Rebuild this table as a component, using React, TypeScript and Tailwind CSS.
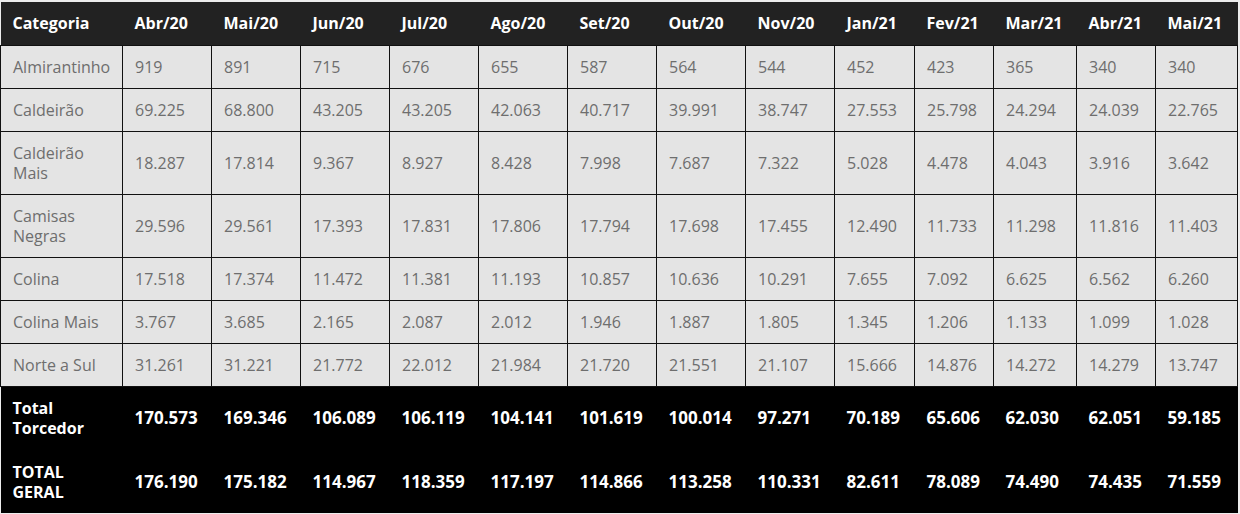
const months = [
  "Abr/20",
  "Mai/20",
  "Jun/20",
  "Jul/20",
  "Ago/20",
  "Set/20",
  "Out/20",
  "Nov/20",
  "Jan/21",
  "Fev/21",
  "Mar/21",
  "Abr/21",
  "Mai/21",
];

// column widths measured from the screenshot
const widths = [122, 89, 89, 89, 89, 89, 89, 89, 89, 80, 79, 83, 79, 82];

const rows: { name: string; values: string[] }[] = [
  { name: "Almirantinho", values: ["919", "891", "715", "676", "655", "587", "564", "544", "452", "423", "365", "340", "340"] },
  { name: "Caldeirão", values: ["69.225", "68.800", "43.205", "43.205", "42.063", "40.717", "39.991", "38.747", "27.553", "25.798", "24.294", "24.039", "22.765"] },
  { name: "Caldeirão Mais", values: ["18.287", "17.814", "9.367", "8.927", "8.428", "7.998", "7.687", "7.322", "5.028", "4.478", "4.043", "3.916", "3.642"] },
  { name: "Camisas Negras", values: ["29.596", "29.561", "17.393", "17.831", "17.806", "17.794", "17.698", "17.455", "12.490", "11.733", "11.298", "11.816", "11.403"] },
  { name: "Colina", values: ["17.518", "17.374", "11.472", "11.381", "11.193", "10.857", "10.636", "10.291", "7.655", "7.092", "6.625", "6.562", "6.260"] },
  { name: "Colina Mais", values: ["3.767", "3.685", "2.165", "2.087", "2.012", "1.946", "1.887", "1.805", "1.345", "1.206", "1.133", "1.099", "1.028"] },
  { name: "Norte a Sul", values: ["31.261", "31.221", "21.772", "22.012", "21.984", "21.720", "21.551", "21.107", "15.666", "14.876", "14.272", "14.279", "13.747"] },
];

const totals: { name: string; values: string[]; height: string }[] = [
  { name: "Total Torcedor", values: ["170.573", "169.346", "106.089", "106.119", "104.141", "101.619", "100.014", "97.271", "70.189", "65.606", "62.030", "62.051", "59.185"], height: "h-[64px]" },
  { name: "TOTAL GERAL", values: ["176.190", "175.182", "114.967", "118.359", "117.197", "114.866", "113.258", "110.331", "82.611", "78.089", "74.490", "74.435", "71.559"], height: "h-[63px]" },
];

const App = () => {
  return (
    <div className="min-h-screen bg-[#ededed] pt-[2px] font-['Open_Sans',sans-serif]">
      <table className="w-[1237px] table-fixed border-collapse text-[16px] leading-5">
        <colgroup>
          {widths.map((w, i) => (
            <col key={i} style={{ width: w }} />
          ))}
        </colgroup>

        {/* Header */}
        <thead>
          <tr className="h-[43px] bg-[#222222] text-white">
            <th className="pl-3 pr-2 text-left font-bold">Categoria</th>
            {months.map((m) => (
              <th key={m} className="pl-3 pr-1 text-left font-bold">
                {m}
              </th>
            ))}
          </tr>
        </thead>

        <tbody>
          {rows.map((row) => (
            <tr key={row.name} className="bg-[#e4e4e4] text-[#6e6e6e]">
              <td className="border border-[#111] py-[11px] pl-3 pr-2 align-middle">
                {row.name}
              </td>
              {row.values.map((v, i) => (
                <td key={i} className="border border-[#111] py-[11px] pl-3 pr-1 align-middle">
                  {v}
                </td>
              ))}
            </tr>
          ))}

          {/* Totals */}
          {totals.map((row) => (
            <tr key={row.name} className={`${row.height} bg-black font-bold text-white`}>
              <td className="pl-3 pr-2 align-middle">{row.name}</td>
              {row.values.map((v, i) => (
                <td key={i} className="pl-3 pr-1 align-middle text-[17px]">
                  {v}
                </td>
              ))}
            </tr>
          ))}
        </tbody>
      </table>
    </div>
  );
};

export default App;
